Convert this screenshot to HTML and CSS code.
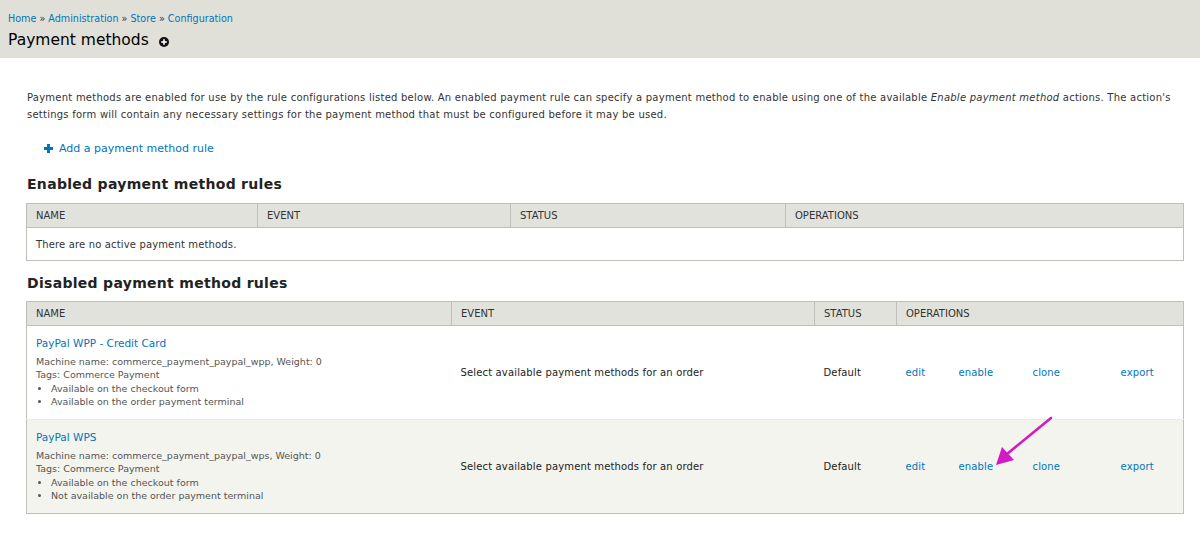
FILE: index.html
```html
<!DOCTYPE html>
<html>
<head>
<meta charset="utf-8">
<link rel="stylesheet" href="styles.css">
</head>
<body>
<div class="branding">
  <div class="breadcrumb"><a href="#">Home</a> » <a href="#">Administration</a> » <a href="#">Store</a> » <a href="#">Configuration</a></div>
  <h1 class="page-title">Payment methods <span class="add-shortcut"><svg width="10" height="10" viewBox="0 0 10 10"><circle cx="5" cy="5" r="5" fill="#111"/><rect x="2.2" y="4.2" width="5.6" height="1.6" fill="#fff"/><rect x="4.2" y="2.2" width="1.6" height="5.6" fill="#fff"/></svg></span></h1>
</div>
<div class="page">
  <p class="intro">Payment methods are enabled for use by the rule configurations listed below. An enabled payment rule can specify a payment method to enable using one of the available <em>Enable payment method</em> actions. The action's settings form will contain any necessary settings for the payment method that must be configured before it may be used.</p>
  <ul class="action-links"><li><svg class="plus" width="9" height="9" viewBox="0 0 9 9"><rect x="0" y="3" width="9" height="3" fill="#0074bd"/><rect x="3" y="0" width="3" height="9" fill="#0074bd"/></svg><a href="#">Add a payment method rule</a></li></ul>

  <h2 class="section-title">Enabled payment method rules</h2>
  <table class="rules rules-enabled">
    <colgroup><col class="c1"><col class="c2"><col class="c3"><col></colgroup>
    <thead>
      <tr><th>Name</th><th>Event</th><th>Status</th><th>Operations</th></tr>
    </thead>
    <tbody>
      <tr class="odd"><td colspan="4" class="empty">There are no active payment methods.</td></tr>
    </tbody>
  </table>

  <h2 class="section-title second">Disabled payment method rules</h2>
  <div class="table-wrap">
  <table class="rules rules-disabled">
    <colgroup><col class="d1"><col class="d2"><col class="d3"><col class="op1"><col class="op2"><col class="op3"><col></colgroup>
    <thead>
      <tr><th>Name</th><th>Event</th><th>Status</th><th colspan="4">Operations</th></tr>
    </thead>
    <tbody>
      <tr class="odd">
        <td class="name-cell">
          <a href="#" class="rule-name">PayPal WPP - Credit Card</a>
          <div class="meta">Machine name: commerce_payment_paypal_wpp, Weight: 0</div>
          <div class="meta">Tags: Commerce Payment</div>
          <ul class="notes"><li>Available on the checkout form</li><li>Available on the order payment terminal</li></ul>
        </td>
        <td>Select available payment methods for an order</td>
        <td>Default</td>
        <td class="op"><a href="#">edit</a></td>
        <td class="op"><a href="#">enable</a></td>
        <td class="op"><a href="#">clone</a></td>
        <td class="op"><a href="#">export</a></td>
      </tr>
      <tr class="even">
        <td class="name-cell last">
          <a href="#" class="rule-name">PayPal WPS</a>
          <div class="meta">Machine name: commerce_payment_paypal_wps, Weight: 0</div>
          <div class="meta">Tags: Commerce Payment</div>
          <ul class="notes"><li>Available on the checkout form</li><li>Not available on the order payment terminal</li></ul>
        </td>
        <td>Select available payment methods for an order</td>
        <td>Default</td>
        <td class="op"><a href="#">edit</a></td>
        <td class="op"><a href="#">enable</a></td>
        <td class="op"><a href="#">clone</a></td>
        <td class="op"><a href="#">export</a></td>
      </tr>
    </tbody>
  </table>
  <svg class="arrow" width="70" height="60" viewBox="0 0 70 60"><line x1="64" y1="2" x2="20" y2="38" stroke="#d21bc4" stroke-width="2.6" stroke-linecap="round"/><polygon points="9,49 15,31 27,44" fill="#d21bc4"/></svg>
  </div>
</div>
</body>
</html>
```

FILE: styles.css
```css
html, body {
  margin: 0;
  padding: 0;
  background: #fff;
}
body {
  font-family: "DejaVu Sans", Verdana, sans-serif;
  font-size: 10px;
  color: #333;
}
a {
  color: #0074bd;
  text-decoration: none;
}
.branding {
  background: #e0e0d8;
  height: 58px;
  padding: 12px 8px 0 8px;
  box-sizing: border-box;
}
.breadcrumb {
  font-size: 9.6px;
  line-height: 13px;
  color: #333;
}
.page-title {
  margin: 5px 0 0 0;
  font-size: 15.5px;
  font-weight: normal;
  line-height: 20px;
  color: #000;
  display: flex;
  align-items: center;
}
.add-shortcut {
  display: inline-flex;
  margin-left: 10px;
  margin-top: 3px;
}
.page {
  padding: 31px 16px 0 27px;
}
.intro {
  margin: 0;
  line-height: 17px;
  color: #333;
  letter-spacing: 0.24px;
}
.action-links {
  list-style: none;
  margin: 17px 0 0 0;
  padding: 0 0 0 17px;
  font-size: 11px;
  line-height: 17px;
}
.action-links li {
  display: flex;
  align-items: center;
}
.plus {
  margin-right: 6px;
}
.section-title {
  margin: 18px 0 0 0;
  font-size: 14px;
  line-height: 18px;
  font-weight: bold;
  color: #222;
  letter-spacing: 0.3px;
}
.section-title.second {
  margin-top: 13px;
}
.rules {
  border-collapse: collapse;
  width: 1158px;
  margin: 10px 0 0 -1px;
  border: 1px solid #bebfb9;
  table-layout: fixed;
}
.rules-disabled {
  margin-top: 9px;
}
.rules th {
  background: #e1e2dc;
  text-transform: uppercase;
  font-weight: normal;
  text-align: left;
  font-size: 10px;
  color: #333;
  height: 23px;
  padding: 0 9px;
  border-bottom: 1px solid #bebfb9;
  border-left: 1px solid #bebfb9;
}
.rules th:first-child { border-left: none; }
.rules td {
  padding: 0 9px;
  vertical-align: middle;
  color: #222;
  letter-spacing: 0.15px;
  white-space: nowrap;
}
.rules .empty {
  height: 32px;
  color: #333;
}
.c1 { width: 231px; }
.c2 { width: 253px; }
.c3 { width: 275px; }
.table-wrap {
  position: relative;
}
.d1 { width: 425px; }
.d2 { width: 363px; }
.d3 { width: 82px; }
.op1 { width: 53px; }
.op2 { width: 74px; }
.op3 { width: 88px; }
.rules-disabled tr.odd td { background: #fff; border-bottom: 1px solid #ebebe6; }
.rules-disabled tr.even td { background: #f3f4ee; }
.rules-disabled td.name-cell {
  padding-top: 10px;
  padding-bottom: 11px;
  letter-spacing: 0;
}
.rules-disabled td.name-cell.last {
  padding-bottom: 11px;
}
.rule-name {
  display: block;
  font-size: 10.5px;
  line-height: 14px;
  margin-bottom: 5px;
}
.meta {
  font-size: 9.5px;
  line-height: 13px;
  color: #555;
}
.notes {
  margin: 1px 0 0 0;
  padding: 0 0 0 15px;
  font-size: 9.5px;
  line-height: 13px;
  color: #555;
  list-style: disc;
}
.arrow {
  position: absolute;
  right: 127px;
  bottom: 38px;
}
```
